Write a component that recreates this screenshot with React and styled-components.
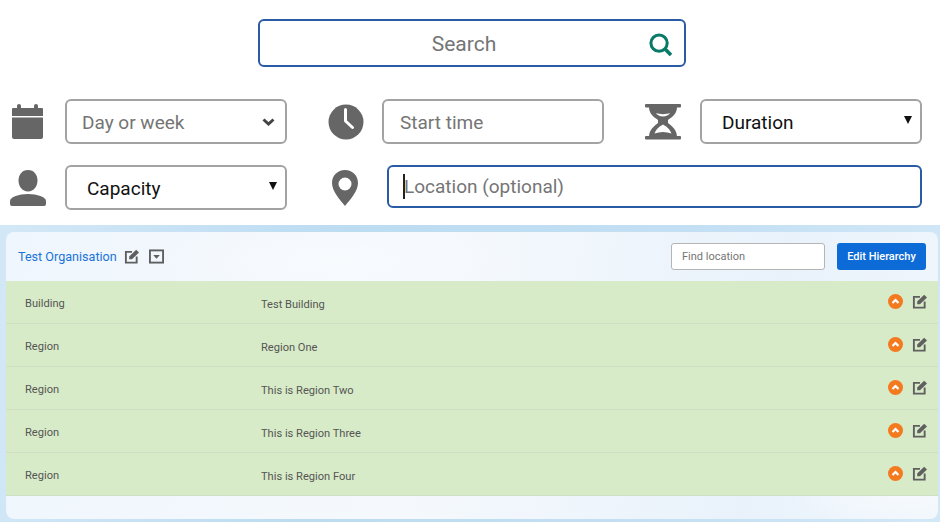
import styled, { createGlobalStyle } from "styled-components";

const rows = [
    { type: "Building", name: "Test Building" },
    { type: "Region", name: "Region One" },
    { type: "Region", name: "This is Region Two" },
    { type: "Region", name: "This is Region Three" },
    { type: "Region", name: "This is Region Four" },
];

const CalendarIcon = () => (
    <svg width="31" height="36" viewBox="0 0 31 36" fill="#666">
        <rect x="5" y="0" width="4" height="7" rx="2" />
        <rect x="22" y="0" width="4" height="7" rx="2" />
        <path d="M1 4h29a1 1 0 0 1 1 1v7H0V5a1 1 0 0 1 1-1z" />
        <path d="M0 13.500h31V33a2 2 0 0 1-2 2H2a2 2 0 0 1-2-2z" />
    </svg>
);

const ClockIcon = () => (
    <svg width="36" height="36" viewBox="0 0 36 36">
        <circle cx="18" cy="18" r="17.500" fill="#666" />
        <path d="M17.500 5.500V17l7 6.500" fill="none" stroke="#fff" strokeWidth="3" strokeLinecap="round" strokeLinejoin="round" />
    </svg>
);

const HourglassIcon = () => (
    <svg width="36" height="36" viewBox="0 0 36 36" fill="#666">
        <rect x="0" y="0" width="36" height="3.500" rx="1" />
        <rect x="0" y="32" width="36" height="3.500" rx="1" />
        <path d="M4 3h28c0 7-5 10-9 13v3c4 3 9 7 9 14H4c0-7 5-11 9-14v-3C9 13 4 10 4 3z" />
        <path d="M11 9c4 1.500 10 1.500 14 0-1 2-4 3.500-7 3.500s-6-1.500-7-3.500z" fill="#fff" />
        <path d="M18 20.500c3 1.500 7 4.500 8.500 9-5.500-2-11.500-2-17 0 1.500-4.500 5.500-7.500 8.500-9z" fill="#fff" />
    </svg>
);

const UserIcon = () => (
    <svg width="36" height="36" viewBox="0 0 36 36" fill="#666">
        <path d="M18 0c6 0 9.500 5 9.500 10.500 0 5.500-3.500 11-9.500 11s-9.500-5.500-9.500-11C8.500 5 12 0 18 0z" />
        <path d="M0 31c0-4 9-7 18-7s18 3 18 7v3a2 2 0 0 1-2 2H2a2 2 0 0 1-2-2z" />
    </svg>
);

const PinIcon = () => (
    <svg width="26" height="36" viewBox="0 0 26 36">
        <path d="M13 0c7.500 0 13 5.500 13 13 0 8-8 17-13 23C8 30 0 21 0 13 0 5.500 5.500 0 13 0z" fill="#666" />
        <circle cx="13" cy="14" r="6.500" fill="#fff" />
    </svg>
);

const SearchIcon = () => (
    <svg width="23" height="23" viewBox="0 0 24 24" fill="none" stroke="#0a7a68" strokeWidth="3.200">
        <circle cx="10.500" cy="10.500" r="8.500" />
        <path d="M16.500 16.500l6.500 6.500" strokeWidth="3.800" />
    </svg>
);

const EditIcon = () => (
    <svg width="15" height="15" viewBox="0 0 16 16" fill="#5f5f5f">
        <path d="M8.500 3H2v11.500h11.500V8" fill="none" stroke="#5f5f5f" strokeWidth="2" />
        <path d="M5.500 11V8L13 .8l3 3L8.500 11z" />
    </svg>
);

const DropdownIcon = () => (
    <svg width="15" height="15" viewBox="0 0 16 16" fill="#5f5f5f">
        <rect x="1" y="1.500" width="14" height="13" fill="none" stroke="#5f5f5f" strokeWidth="2" />
        <path d="M4.500 6.500h7L8 10.500z" />
    </svg>
);

const CollapseIcon = () => (
    <svg width="15" height="15" viewBox="0 0 15 15">
        <circle cx="7.500" cy="7.500" r="7.500" fill="#f47a1f" />
        <path d="M4.500 9L7.500 6l3 3" fill="none" stroke="#fff" strokeWidth="2.200" />
    </svg>
);

const ChevronIcon = () => (
    <svg width="13" height="8" viewBox="0 0 13 8">
        <path d="M1.500 1.500l5 4.500 5-4.500" fill="none" stroke="#444" strokeWidth="3" />
    </svg>
);

const App = () => {
    return (
        <>
            <GlobalStyle />
            <Page>
                <TopPanel>
                    <SearchBar>
                        <SearchInput placeholder="Search" />
                        <SearchIconWrap>
                            <SearchIcon />
                        </SearchIconWrap>
                    </SearchBar>
                    <FilterRow>
                        <IconSlot $width={65} $left={12}>
                            <CalendarIcon />
                        </IconSlot>
                        <Field>
                            <FieldPlaceholder>Day or week</FieldPlaceholder>
                            <ChevronIcon />
                        </Field>
                        <IconSlot $width={95} $left={41}>
                            <ClockIcon />
                        </IconSlot>
                        <TextField placeholder="Start time" />
                        <IconSlot $width={96} $left={41}>
                            <HourglassIcon />
                        </IconSlot>
                        <Field>
                            <FieldValue>Duration</FieldValue>
                            <Arrow />
                        </Field>
                    </FilterRow>
                    <FilterRow>
                        <IconSlot $width={65} $left={10}>
                            <UserIcon />
                        </IconSlot>
                        <Field>
                            <FieldValue>Capacity</FieldValue>
                            <Arrow />
                        </Field>
                        <IconSlot $width={100} $left={45}>
                            <PinIcon />
                        </IconSlot>
                        <LocationWrap>
                            <LocationInput placeholder="Location (optional)" />
                            <Caret />
                        </LocationWrap>
                    </FilterRow>
                </TopPanel>
                <SkyPanel>
                    <Card>
                        <CardHeader>
                            <OrgGroup>
                                <OrgLink>Test Organisation</OrgLink>
                                <EditIcon />
                                <DropdownIcon />
                            </OrgGroup>
                            <HeaderActions>
                                <FindInput placeholder="Find location" />
                                <EditButton>Edit Hierarchy</EditButton>
                            </HeaderActions>
                        </CardHeader>
                        {rows.map((row) => (
                            <Row key={row.name}>
                                <RowType>{row.type}</RowType>
                                <RowName>{row.name}</RowName>
                                <RowActions>
                                    <CollapseIcon />
                                    <EditIcon />
                                </RowActions>
                            </Row>
                        ))}
                        <CardFooter />
                    </Card>
                </SkyPanel>
            </Page>
        </>
    );
};

const GlobalStyle = createGlobalStyle`
    html, body {
        margin: 0;
        padding: 0;
        background: #fff;
    }
    * {
        box-sizing: border-box;
    }
    body {
        font-family: Roboto, "Liberation Sans", sans-serif;
    }
`;
const Page = styled.div`
    width: 940px;
    height: 522px;
    overflow: hidden;
    display: flex;
    flex-direction: column;
`;
const TopPanel = styled.div`
    flex: none;
    height: 225px;
    padding-top: 19px;
    background: #fff;
`;
const SearchBar = styled.div`
    position: relative;
    width: 428px;
    height: 48px;
    margin: 0 0 32px 258px;
`;
const SearchInput = styled.input`
    width: 100%;
    height: 100%;
    border: 2px solid #2a5ba5;
    border-radius: 6px;
    outline: none;
    padding: 2px 16px 0 0;
    font: 400 21px Roboto, sans-serif;
    text-align: center;
    &::placeholder {
        color: #757575;
        opacity: 1;
    }
`;
const SearchIconWrap = styled.div`
    position: absolute;
    right: 14px;
    top: 14px;
    height: 23px;
`;
const FilterRow = styled.div`
    display: flex;
    height: 45px;
    margin-bottom: 21px;
    width: 922px;
`;
const IconSlot = styled.div`
    flex: none;
    width: ${(props) => props.$width}px;
    padding-left: ${(props) => props.$left}px;
    display: flex;
    align-items: center;
`;
const Field = styled.div`
    flex: none;
    width: 222px;
    height: 45px;
    border: 2px solid #a3a3a3;
    border-radius: 6px;
    display: flex;
    align-items: center;
    justify-content: space-between;
    padding: 0 10px 0 15px;
`;
const FieldPlaceholder = styled.span`
    font-size: 19px;
    color: #757575;
    padding-top: 2px;
`;
const FieldValue = styled.span`
    font-size: 19px;
    color: #111;
    padding: 2px 0 0 5px;
`;
const Arrow = styled.span`
    width: 0;
    height: 0;
    border-left: 4px solid transparent;
    border-right: 4px solid transparent;
    border-top: 8px solid #111;
    margin: 0 -2px 3px 0;
`;
const TextField = styled.input`
    flex: none;
    width: 222px;
    height: 45px;
    border: 2px solid #a3a3a3;
    border-radius: 6px;
    padding: 2px 16px 0;
    outline: none;
    font: 400 19px Roboto, sans-serif;
    &::placeholder {
        color: #757575;
        opacity: 1;
    }
`;
const LocationWrap = styled.div`
    position: relative;
    flex: 1;
`;
const LocationInput = styled.input`
    width: 100%;
    height: 43px;
    border: 2px solid #2a5ba5;
    border-radius: 6px;
    padding: 0 15px;
    outline: none;
    font: 400 19px Roboto, sans-serif;
    &::placeholder {
        color: #757575;
        opacity: 1;
    }
`;
const Caret = styled.span`
    position: absolute;
    left: 16px;
    top: 9px;
    width: 2px;
    height: 25px;
    background: #222;
`;
const SkyPanel = styled.div`
    flex: 1;
    padding: 7px 2px 3px 6px;
    background: linear-gradient(100deg, #d3e8f7 0%, #bcdcf2 35%, #c3dff3 70%, #d3e8f7 100%);
`;
const Card = styled.div`
    height: 100%;
    border-radius: 8px;
    overflow: hidden;
    display: flex;
    flex-direction: column;
    background:
        radial-gradient(ellipse 180px 50px at 330px 30px, #f8fbfe 0%, rgba(248, 251, 254, 0) 100%),
        radial-gradient(ellipse 120px 40px at 900px 260px, #f6fafe 0%, rgba(246, 250, 254, 0) 100%),
        linear-gradient(100deg, #eff6fd 0%, #f5f9fd 45%, #e9f2fb 80%, #f0f6fc 100%);
`;
const CardHeader = styled.div`
    flex: none;
    height: 49px;
    display: flex;
    align-items: center;
    justify-content: space-between;
    padding: 0 12px 0 12px;
`;
const OrgGroup = styled.div`
    display: flex;
    align-items: center;
    gap: 10px;
`;
const OrgLink = styled.a`
    font-size: 12.6px;
    color: #1a74d8;
    margin-right: -3px;
`;
const HeaderActions = styled.div`
    display: flex;
    align-items: center;
    gap: 12px;
`;
const FindInput = styled.input`
    width: 154px;
    height: 27px;
    border: 1px solid #b5b5b5;
    border-radius: 3px;
    padding: 0 10px;
    outline: none;
    font: 400 11px Roboto, sans-serif;
    background: #fff;
    &::placeholder {
        color: #757575;
        opacity: 1;
    }
`;
const EditButton = styled.button`
    width: 89px;
    height: 27px;
    border: none;
    border-radius: 3px;
    background: #0d6bd8;
    color: #fff;
    font: 500 11px Roboto, sans-serif;
    padding: 0;
`;
const Row = styled.div`
    flex: none;
    height: 43px;
    display: flex;
    align-items: center;
    background: #d8ebc8;
    border-bottom: 1px solid #cfdfc4;
    padding: 0 11px 0 19px;
    font-size: 11.1px;
    font-weight: 400;
    color: #555;
`;
const RowType = styled.div`
    width: 236px;
    margin-top: 2px;
`;
const RowName = styled.div`
    flex: 1;
    margin-top: 4px;
`;
const RowActions = styled.div`
    display: flex;
    align-items: center;
    gap: 9px;
    margin-top: -1px;
`;
const CardFooter = styled.div`
    flex: 1;
`;

export default App;
